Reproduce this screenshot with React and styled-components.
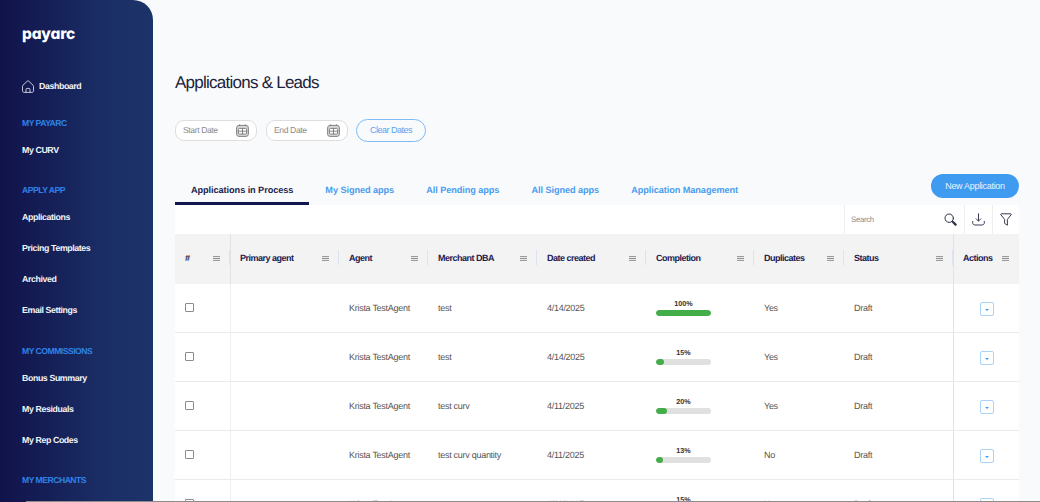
import React from "react";
import styled, { createGlobalStyle } from "styled-components";

const GlobalStyle = createGlobalStyle`
  html, body {
    margin: 0;
    padding: 0;
    height: 502px;
    overflow: hidden;
    background: #f9fafc;
    font-family: "Liberation Sans", Arial, sans-serif;
    text-rendering: geometricPrecision;
  }
`;

const Layout = styled.div`
  display: flex;
  height: 502px;
  overflow: hidden;
`;

const Sidebar = styled.aside`
  width: 153px;
  flex-shrink: 0;
  box-sizing: border-box;
  padding: 22px 0 0 22px;
  background: linear-gradient(90deg, #11124a 0%, #1a2f66 70%, #1c3369 100%);
  border-top-right-radius: 20px;
  display: flex;
  flex-direction: column;
`;

const Logo = styled.div`
  height: 24px;
  margin-bottom: 33.5px;
  font-family: "Inter", sans-serif;
  font-feature-settings: "cv11";
  font-weight: 800;
  font-size: 15.5px;
  line-height: 24px;
  letter-spacing: -0.2px;
  color: #ffffff;
`;

const DashboardLink = styled.div`
  display: flex;
  align-items: center;
  gap: 5px;
  height: 24px;
  margin-bottom: 22.5px;
  font-size: 8.8px;
  font-weight: 700;
  letter-spacing: -0.4px;
  color: #f2f4f8;
`;

const Section = styled.div`
  margin-bottom: 16.4px;
`;

const SectionLabel = styled.div`
  height: 16px;
  margin-bottom: 4px;
  font-size: 8.6px;
  font-weight: 700;
  line-height: 16px;
  letter-spacing: -0.5px;
  color: #2f82e8;
`;

const NavItem = styled.div`
  height: 31px;
  font-size: 8.8px;
  font-weight: 700;
  line-height: 31px;
  letter-spacing: -0.4px;
  color: #f2f4f8;
`;

const Main = styled.main`
  flex: 1;
  min-width: 0;
  padding: 70px 21px 0 22px;
`;

const Title = styled.h1`
  margin: 0 0 25px;
  height: 24px;
  font-size: 17px;
  font-weight: 400;
  line-height: 25px;
  letter-spacing: -0.75px;
  color: #20223a;
`;

const DateRow = styled.div`
  display: flex;
  align-items: center;
  gap: 9px;
  height: 23px;
  margin-bottom: 32px;
`;

const DateField = styled.div`
  width: 82px;
  height: 21px;
  box-sizing: border-box;
  display: flex;
  align-items: center;
  justify-content: space-between;
  padding: 0 7px 1px 7px;
  background: #ffffff;
  border: 1px solid #dedede;
  border-radius: 9px;
  font-size: 8.6px;
  letter-spacing: -0.4px;
  color: #8b8b8b;
`;

const ClearButton = styled.button`
  width: 70px;
  height: 23px;
  margin-left: -1px;
  padding: 0 0 1px;
  background: transparent;
  border: 1px solid #7dbbf5;
  border-radius: 12px;
  font: 400 9px "Liberation Sans", Arial, sans-serif;
  letter-spacing: -0.5px;
  color: #5aa5ee;
`;

const TabRow = styled.div`
  display: flex;
  justify-content: space-between;
  align-items: flex-start;
  height: 31px;
`;

const Tabs = styled.div`
  display: flex;
`;

const Tab = styled.div`
  height: 31px;
  box-sizing: border-box;
  padding: 0 16px;
  font-size: 9.2px;
  font-weight: 700;
  line-height: 32px;
  letter-spacing: -0.08px;
  color: ${({ $active }) => ($active ? "#20244f" : "#4a9def")};
  border-bottom: 3px solid ${({ $active }) => ($active ? "#14164f" : "transparent")};
`;

const NewButton = styled.button`
  width: 88px;
  height: 24px;
  padding: 0;
  background: #3f9bf0;
  border: 0;
  border-radius: 12px;
  font: 400 9px "Liberation Sans", Arial, sans-serif;
  letter-spacing: -0.3px;
  color: #e8f3fe;
`;

const Toolbar = styled.div`
  display: flex;
  justify-content: flex-end;
  height: 29px;
  background: #ffffff;
`;

const ToolCell = styled.div`
  width: ${({ $width }) => $width}px;
  box-sizing: border-box;
  display: flex;
  align-items: center;
  justify-content: ${({ $search }) => ($search ? "space-between" : "center")};
  padding: ${({ $search }) => ($search ? "0 7px 0 6px" : "0")};
  border-left: 1px solid #eeeeee;
  font-size: 7.8px;
  letter-spacing: -0.3px;
  color: #8a8a8a;
`;

const Row = styled.div`
  display: grid;
  grid-template-columns: 55px 109px 89px 109px 109px 108px 90px 109px 66px;
  height: ${({ $head }) => ($head ? "50px" : "49px")};
  box-sizing: border-box;
  background: ${({ $head }) => ($head ? "#f3f3f3" : "#ffffff")};
  border-bottom: ${({ $head }) => ($head ? "0" : "1px solid #ebebeb")};
`;

const HeadCell = styled.div`
  position: relative;
  display: flex;
  align-items: center;
  justify-content: space-between;
  padding: 0 10px 2px ${({ $divider }) => ($divider ? "9px" : "10px")};
  font-size: 9px;
  font-weight: 700;
  letter-spacing: -0.5px;
  color: #1c2050;
  border-left: ${({ $divider }) => ($divider ? "1px solid #e2e2e2" : "0")};

  &::after {
    content: "";
    display: ${({ $last }) => ($last ? "none" : "block")};
    position: absolute;
    right: 0;
    top: 16px;
    height: 15px;
    width: 1px;
    background: #dde3ee;
  }
`;

const Cell = styled.div`
  display: flex;
  align-items: center;
  justify-content: ${({ $center }) => ($center ? "center" : "flex-start")};
  padding: 0 ${({ $center }) => ($center ? "0" : "10px")} 1px;
  font-size: 9px;
  letter-spacing: -0.28px;
  color: #555555;
  white-space: nowrap;
  border-left: ${({ $divider }) => ($divider ? `1px solid ${$divider}` : "0")};
`;

const Checkbox = styled.span`
  width: 9px;
  height: 9px;
  box-sizing: border-box;
  border: 1px solid #8c8c8c;
  border-radius: 1px;
  background: #fff;
`;

const Progress = styled.div`
  width: 55px;
  text-align: center;
  font-size: 7.2px;
  font-weight: 700;
  line-height: 9px;
  letter-spacing: 0;
  color: #333333;
`;

const Track = styled.div`
  height: 6px;
  margin-top: 2px;
  background: #e0e0e0;
  border-radius: 3px;
  overflow: hidden;
`;

const Fill = styled.div`
  height: 100%;
  background: #43ad4a;
  border-radius: 3px;
`;

const ActionButton = styled.span`
  width: 14px;
  height: 14px;
  margin-top: 2px;
  box-sizing: border-box;
  display: flex;
  align-items: center;
  justify-content: center;
  padding-top: 2px;
  border: 1px solid #a9d3f8;
  border-radius: 2px;
  background: #fff;

  &::before {
    content: "";
    border-left: 2px solid transparent;
    border-right: 2px solid transparent;
    border-top: 2px solid #3f9bf0;
  }
`;

const BottomEdge = styled.div`
  position: fixed;
  left: 26px;
  right: 0;
  bottom: 0;
  height: 1px;
  background: #8c8c8c;
`;

const HomeIcon = () => (
  <svg width="12" height="13" viewBox="0 0 12 13" fill="none" stroke="#f2f4f8" strokeWidth="0.8">
    <path d="M1 5.2 5.2 1.2a1.2 1.2 0 0 1 1.6 0L11 5.2c.3.3.5.7.5 1.1v4.5c0 .9-.7 1.6-1.6 1.6H2.1c-.9 0-1.6-.7-1.6-1.6V6.3c0-.4.2-.8.5-1.1Z" />
    <path d="M4 12.4V9.4c0-.6.4-1 1-1h2c.6 0 1 .4 1 1v3" />
  </svg>
);

const CalendarIcon = () => (
  <svg width="13" height="13" viewBox="0 0 13 13" fill="none" stroke="#777777" strokeWidth="0.9">
    <rect x="0.6" y="1.4" width="11.8" height="11" rx="2.4" fill="#d8d8d8" />
    <rect x="2.4" y="4.4" width="8.2" height="5.6" rx="1" fill="#ffffff" />
    <path d="M2.4 7.2h8.2M6.5 4.4v5.6M3.6 0.4v1.6M9.4 0.4v1.6" />
  </svg>
);

const SearchIcon = () => (
  <svg width="13" height="13" viewBox="0 0 13 13" fill="none" stroke="#2b2e48" strokeLinecap="round">
    <circle cx="5.2" cy="5.2" r="4.2" strokeWidth="1" />
    <path d="M9 9 11.6 11.6" strokeWidth="2.2" />
  </svg>
);

const DownloadIcon = () => (
  <svg width="13" height="13" viewBox="0 0 13 13" fill="none" stroke="#3a3d52" strokeWidth="1" strokeLinecap="round" strokeLinejoin="round">
    <path d="M6.5 0.8v7.2M4.2 5.8l2.3 2.3 2.3-2.3" />
    <path d="M0.7 8.4v1.4c0 1.3 1 2.2 2.2 2.2h7.2c1.2 0 2.2-.9 2.2-2.2V8.4" />
  </svg>
);

const FilterIcon = () => (
  <svg width="12" height="13" viewBox="0 0 12 13" fill="none" stroke="#3a3d52" strokeWidth="1" strokeLinejoin="round">
    <path d="M1.2 0.8h9.6c.5 0 .7.5.4.9L7.4 6.4v5.8L4.6 10.4v-4L.8 1.7C.5 1.3.7.8 1.2.8Z" />
  </svg>
);

const MenuIcon = () => (
  <svg width="7" height="5" viewBox="0 0 7 5" stroke="#777777" strokeWidth="0.8">
    <path d="M0 0.6h7M0 2.5h7M0 4.4h7" />
  </svg>
);

const navSections = [
  { label: "MY PAYARC", items: ["My CURV"] },
  { label: "APPLY APP", items: ["Applications", "Pricing Templates", "Archived", "Email Settings"] },
  { label: "MY COMMISSIONS", items: ["Bonus Summary", "My Residuals", "My Rep Codes"] },
  { label: "MY MERCHANTS", items: [] },
];

const tabs = ["Applications in Process", "My Signed apps", "All Pending apps", "All Signed apps", "Application Management"];

const columns = ["#", "Primary agent", "Agent", "Merchant DBA", "Date created", "Completion", "Duplicates", "Status", "Actions"];

const rows = [
  { merchant: "test", date: "4/14/2025", pct: 100, dup: "Yes" },
  { merchant: "test", date: "4/14/2025", pct: 15, dup: "Yes" },
  { merchant: "test curv", date: "4/11/2025", pct: 20, dup: "Yes" },
  { merchant: "test curv quantity", date: "4/11/2025", pct: 13, dup: "No" },
  { merchant: "test curv", date: "4/11/2025", pct: 15, dup: "Yes" },
];

export default function App() {
  return (
    <Layout>
      <GlobalStyle />
      <Sidebar>
        <Logo>payarc</Logo>
        <DashboardLink>
          <HomeIcon /> Dashboard
        </DashboardLink>
        {navSections.map((section) => (
          <Section key={section.label}>
            <SectionLabel>{section.label}</SectionLabel>
            {section.items.map((item) => (
              <NavItem key={item}>{item}</NavItem>
            ))}
          </Section>
        ))}
      </Sidebar>

      <Main>
        <Title>Applications &amp; Leads</Title>
        <DateRow>
          <DateField>Start Date <CalendarIcon /></DateField>
          <DateField>End Date <CalendarIcon /></DateField>
          <ClearButton>Clear Dates</ClearButton>
        </DateRow>

        <TabRow>
          <Tabs>
            {tabs.map((tab, i) => (
              <Tab key={tab} $active={i === 0}>{tab}</Tab>
            ))}
          </Tabs>
          <NewButton>New Application</NewButton>
        </TabRow>

        <Toolbar>
          <ToolCell $width={120} $search>Search <SearchIcon /></ToolCell>
          <ToolCell $width={28}><DownloadIcon /></ToolCell>
          <ToolCell $width={27}><FilterIcon /></ToolCell>
        </Toolbar>

        <Row $head>
          {columns.map((col, i) => (
            <HeadCell key={col} $divider={i === 1 || i === 8} $last={i === 8}>
              {col}
              <MenuIcon />
            </HeadCell>
          ))}
        </Row>

        {rows.map((row, i) => (
          <Row key={i}>
            <Cell><Checkbox /></Cell>
            <Cell $divider="#efefef" />
            <Cell>Krista TestAgent</Cell>
            <Cell>{row.merchant}</Cell>
            <Cell>{row.date}</Cell>
            <Cell>
              <Progress>
                {row.pct}%
                <Track>
                  <Fill style={{ width: `${row.pct}%` }} />
                </Track>
              </Progress>
            </Cell>
            <Cell>{row.dup}</Cell>
            <Cell>Draft</Cell>
            <Cell $center $divider="#e2e2e2"><ActionButton /></Cell>
          </Row>
        ))}
      </Main>
      <BottomEdge />
    </Layout>
  );
}
